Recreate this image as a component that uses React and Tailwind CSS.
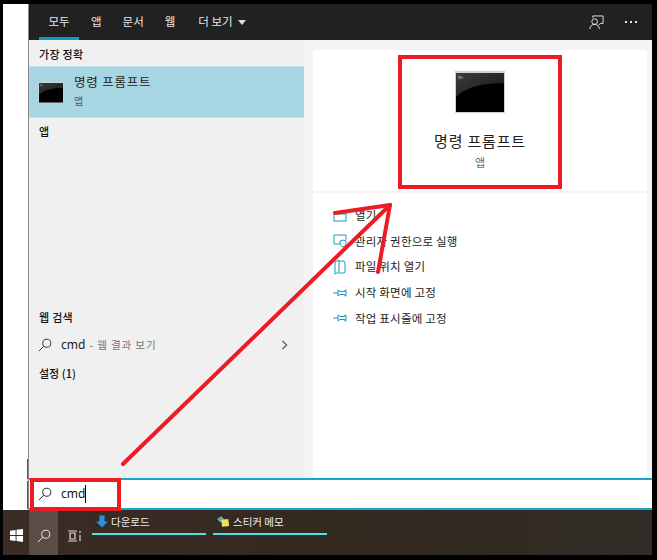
import { useState } from "react";

const KR = "font-['Noto_Sans_CJK_KR','Noto_Sans',sans-serif]";

function CmdIcon({ className }) {
  return (
    <svg viewBox="0 0 50 42" className={className}>
      <defs>
        <linearGradient id="cmdShine" x1="0" y1="0" x2="1" y2="1">
          <stop offset="0" stopColor="#3c3c3c" />
          <stop offset="1" stopColor="#161616" />
        </linearGradient>
      </defs>
      <rect x="0" y="0" width="50" height="42" fill="#c9d3dc" />
      <rect x="1" y="2" width="48" height="39" fill="#000" />
      <path d="M1 2H49V12C30 12 12 15 1 26Z" fill="url(#cmdShine)" />
      <path d="M3 5l5 2M3 7h3" stroke="#999" strokeWidth="1" />
    </svg>
  );
}

function SearchGlass({ className, color = "#333" }) {
  return (
    <svg viewBox="0 0 16 16" className={className} fill="none" stroke={color} strokeWidth="1.1">
      <circle cx="10" cy="6" r="4.6" />
      <path d="M6.6 9.4L1 15" />
    </svg>
  );
}

function OpenIcon() {
  return (
    <svg viewBox="0 0 14 14" className="w-[14px] h-[14px]" fill="none" stroke="#1c97c4" strokeWidth="1">
      <rect x="1" y="2.5" width="12" height="9.5" />
      <path d="M1 5h12" />
    </svg>
  );
}

function AdminIcon() {
  return (
    <svg viewBox="0 0 14 14" className="w-[14px] h-[14px]" fill="none" stroke="#1c97c4" strokeWidth="1">
      <path d="M7 10H1V1h12v5" />
      <path d="M7 7l3-1 3 1v2c0 2-1.5 3.4-3 4-1.500-.6-3-2-3-4z" />
    </svg>
  );
}

function FolderIcon() {
  return (
    <svg viewBox="0 0 14 16" className="w-[14px] h-[16px]" fill="none" stroke="#1c97c4" strokeWidth="1">
      <path d="M2 3l4-2v12l-4 2zM6 2h5l1 2v9l-1 1H6" />
    </svg>
  );
}

function PinIcon() {
  return (
    <svg viewBox="0 0 14 10" className="w-[14px] h-[10px]" fill="none" stroke="#1c97c4" strokeWidth="1">
      <path d="M0 5h5M5 2v6l2-1.500h5V8l1 0V2h-1v1.500H7z" />
    </svg>
  );
}

function Action({ icon, label }) {
  return (
    <li className="h-[25.6px] flex items-center">
      <span className="w-[22px] flex justify-start">{icon}</span>
      <span className="text-[11.5px] text-[#222] tracking-[0.2px]">{label}</span>
    </li>
  );
}

function App() {
  const [query] = useState("cmd");
  const tabs = ["앱", "문서", "웹"];
  const actions = [
    { icon: <OpenIcon />, label: "열기" },
    { icon: <AdminIcon />, label: "관리자 권한으로 실행" },
    { icon: <FolderIcon />, label: "파일 위치 열기" },
    { icon: <PinIcon />, label: "시작 화면에 고정" },
    { icon: <PinIcon />, label: "작업 표시줄에 고정" },
  ];

  return (
    <div className={`${KR} relative w-[657px] h-[560px] bg-black pt-[4px] pl-[3px] pr-[5px] pb-[5px] flex flex-col overflow-hidden`}>
      <div className="flex flex-1 min-h-0">
        {/* white strip left of the start menu */}
        <div className="w-[25px] bg-white flex flex-col justify-end items-end shrink-0">
          <div className="w-[1px] h-[20px] bg-[#555] mb-[2px]" />
          <div className="w-[1px] h-[28px] bg-[#555] mb-[1px]" />
        </div>

        <div className="flex-1 flex flex-col min-w-0 border-l border-[#888]">
          {/* top tabs */}
          <nav className="h-[36px] bg-[#212121] flex items-center text-[#e8e8e8] text-[11.5px] shrink-0 pl-[10px] pr-[15px]">
            <div className="relative w-[40px] h-full flex items-center justify-center">
              모두
              <div className="absolute left-0 right-0 bottom-0 h-[3px] bg-[#0c9bc4]" />
            </div>
            <ul className="flex items-center ml-[12px] gap-[21px]">
              {tabs.map((t) => (
                <li key={t}>{t}</li>
              ))}
              <li className="ml-[2px] flex items-center gap-[5px]">
                더 보기
                <span className="w-0 h-0 border-l-[4px] border-r-[4px] border-t-[5px] border-l-transparent border-r-transparent border-t-[#ddd]" />
              </li>
            </ul>
            <div className="ml-auto flex items-center gap-[21px]">
              <svg viewBox="0 0 16 16" className="w-[15px] h-[15px]" fill="none" stroke="#e8e8e8" strokeWidth="1">
                <path d="M4 3V1h11v8h-3l-2 2" />
                <circle cx="6" cy="7" r="3" />
                <path d="M1 15c0-3 2-5 5-5s5 2 5 5" />
              </svg>
              <span className="flex gap-[3px]">
                <i className="w-[2px] h-[2px] bg-[#e8e8e8]" />
                <i className="w-[2px] h-[2px] bg-[#e8e8e8]" />
                <i className="w-[2px] h-[2px] bg-[#e8e8e8]" />
              </span>
            </div>
          </nav>

          <div className="flex flex-1 min-h-0">
            {/* results */}
            <div className="w-[275px] bg-[#f0f0f0] flex flex-col shrink-0 text-[#111]">
              <div className="h-[26px] pl-[10px] flex items-center text-[11px] font-medium tracking-[0.3px] pt-[2px]">가장 정확</div>
              <div className="h-[52px] bg-[#a8d5e2] border-y border-[#bfe0ea] flex items-center pl-[9px]">
                <CmdIcon className="w-[26px] h-[21px]" />
                <div className="ml-[10px] -mt-[4px]">
                  <div className="text-[12.500px] leading-[18px] tracking-[0.8px] text-[#222]">명령 프롬프트</div>
                  <div className="text-[10px] leading-[14px] mt-[3px] text-[#555]">앱</div>
                </div>
              </div>
              <div className="pl-[10px] mt-[5px] text-[11px] font-medium leading-[16px]">앱</div>
              <div className="flex-1" />
              <div className="pl-[10px] text-[11px] font-medium leading-[16px] tracking-[0.3px]">웹 검색</div>
              <div className="h-[28px] mt-[6px] pl-[9px] pr-[16px] flex items-center">
                <SearchGlass className="w-[14px] h-[14px]" />
                <span className="ml-[9px] text-[12px] font-['Noto_Sans',sans-serif] text-[#222]">cmd</span>
                <span className="ml-[4px] text-[10.500px] text-[#777] tracking-[0.9px]">- 웹 결과 보기</span>
                <svg viewBox="0 0 8 12" className="ml-auto w-[7px] h-[10px]" fill="none" stroke="#555" strokeWidth="1.500">
                  <path d="M1.500 1l5 5-5 5" />
                </svg>
              </div>
              <div className="pl-[10px] mt-[6px] mb-[97px] text-[11px] font-medium leading-[16px]">설정 (1)</div>
            </div>

            {/* preview */}
            <div className="flex-1 bg-[#f5f5f5] pt-[10px] pl-[9px] pr-[5px] flex flex-col gap-[2px] min-w-0">
              <section className="h-[141px] bg-white flex flex-col items-center shrink-0 pt-[21px]">
                <CmdIcon className="w-[50px] h-[42px]" />
                <div className="mt-[18px] text-[15px] leading-[20px] tracking-[0.8px] text-[#222]">명령 프롬프트</div>
                <div className="mt-[3px] text-[11px] leading-[16px] text-[#666]">앱</div>
              </section>
              <section className="flex-1 bg-white pt-[10px] pl-[20px]">
                <ul>
                  {actions.map((a) => (
                    <Action key={a.label} icon={a.icon} label={a.label} />
                  ))}
                </ul>
              </section>
            </div>
          </div>

          {/* search box */}
          <div className="h-[32px] bg-white border-t-2 border-b-2 border-[#1ba5c9] flex items-center pl-[9px] shrink-0">
            <SearchGlass className="w-[14px] h-[14px]" color="#222" />
            <span className="ml-[9px] text-[12px] font-['Noto_Sans',sans-serif] text-[#111]">{query}</span>
            <span className="w-[1px] h-[18px] bg-black" />
          </div>
        </div>
      </div>

      {/* taskbar */}
      <footer className="h-[45px] bg-gradient-to-r from-[#3b2c26] via-[#33291f] to-[#302c26] flex items-stretch text-[#eee] text-[10.5px] shrink-0">
        <div className="w-[26px] flex items-center justify-center pl-[1px] pt-[6px]">
          <svg viewBox="0 0 14 14" className="w-[13px] h-[13px]" fill="#fff">
            <path d="M0 2l6-1v5.500H0zM7 .8L14 0v6.500H7zM0 7.500h6V13l-6-1zM7 7.500h7V14l-7-1z" />
          </svg>
        </div>
        <div className="w-[29px] bg-[#5a4d47] flex items-center justify-center pt-[6px]">
          <SearchGlass className="w-[14px] h-[14px]" color="#eee" />
        </div>
        <div className="w-[34px] flex items-center justify-center pt-[6px]">
          <svg viewBox="0 0 14 12" className="w-[14px] h-[12px]" fill="none" stroke="#ddd" strokeWidth="1.200">
            <path d="M0 1h9M0 11h9M2 3h5v6H2zM12 1v2M12 5v6" />
          </svg>
        </div>
        <div className="w-[114px] h-[25px] border-b-2 border-[#4fe0ea] flex items-center gap-[3px]">
          <svg viewBox="0 0 14 14" className="ml-[4px] w-[12px] h-[13px]" fill="#2f8fe0">
            <path d="M4 0h6v7h4l-7 7-7-7h4z" />
          </svg>
          <span>다운로드</span>
        </div>
        <div className="w-[114px] h-[25px] ml-[7px] border-b-2 border-[#4fe0ea] flex items-center gap-[3px]">
          <svg viewBox="0 0 16 14" className="ml-[3px] w-[14px] h-[13px]">
            <path d="M1 4l5-3 4 4-5 3z" fill="#5fa8a0" />
            <path d="M6 5l8-1 1 8-8 1z" fill="#f0e060" />
          </svg>
          <span>스티커 메모</span>
        </div>
      </footer>

      {/* annotations drawn on top of the screenshot */}
      <div className="absolute left-[398px] top-[55px] w-[164px] h-[134px] border-[4px] border-[#ed1c24]" />
      <div className="absolute left-[30px] top-[478px] w-[91px] h-[33px] border-[4px] border-[#ed1c24]" />
      <svg viewBox="0 0 657 560" className="absolute inset-0 w-[657px] h-[560px] pointer-events-none" fill="none" stroke="#ed1c24" strokeWidth="4" strokeLinecap="round">
        <path d="M123 464L390 205" />
        <path d="M335 213L390 205" />
        <path d="M378 272L390 205" />
      </svg>
    </div>
  );
}

export default App;
